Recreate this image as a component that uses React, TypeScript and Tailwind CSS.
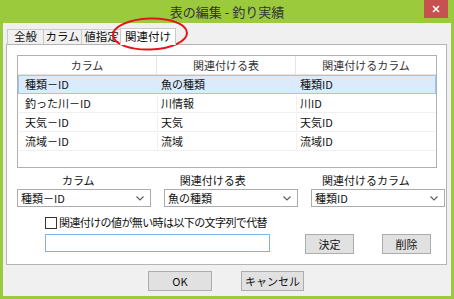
import { useState } from 'react';

const FONT = { fontFamily: '"Noto Sans CJK JP", "Noto Sans", sans-serif' };

const rows = [
  ['種類－ID', '魚の種類', '種類ID'],
  ['釣った川－ID', '川情報', '川ID'],
  ['天気－ID', '天気', '天気ID'],
  ['流域－ID', '流域', '流域ID'],
];

const tabs = ['全般', 'カラム', '値指定'];

function Chevron() {
  return (
    <svg width="8" height="5" viewBox="0 0 8 5" className="shrink-0">
      <polyline points="0.5,0.5 4,4 7.5,0.5" fill="none" stroke="#606060" strokeWidth="1.2" />
    </svg>
  );
}

function Select({ value }: { value: string }) {
  return (
    <div className="w-[134px] h-[18px] bg-white border border-[#acacac] flex items-center justify-between pl-[3px] pr-[6px]">
      <span className="leading-none">{value}</span>
      <Chevron />
    </div>
  );
}

function Button({ label, w }: { label: string; w: string }) {
  return (
    <div className={`${w} h-[20px] bg-[#e1e1e1] border border-[#adadad] flex items-center justify-center leading-none`}>
      {label}
    </div>
  );
}

export default function App() {
  const [checked, setChecked] = useState(false);

  return (
    <div className="w-[454px] h-[299px] bg-[#9bcb3c] flex flex-col text-[11px] text-[#111] relative" style={FONT}>
      {/* title bar */}
      <div className="h-[23px] relative flex items-center justify-center">
        <span className="text-[13px] text-[#333] leading-none">表の編集 - 釣り実績</span>
        <div className="absolute top-0 right-[6px] w-[24px] h-[18px] bg-[#c75050] flex items-center justify-center">
          <svg width="8" height="8" viewBox="0 0 8 8">
            <path d="M1 1 L7 7 M7 1 L1 7" stroke="#fff" strokeWidth="1.6" />
          </svg>
        </div>
      </div>

      {/* client area */}
      <div className="flex-1 mx-[3px] mb-[3px] bg-[#f0f0f0] flex flex-col pt-[4px]">
        {/* tabs */}
        <div className="h-[17px] flex items-end pl-[4px]">
          {tabs.map((t, i) => (
            <div
              key={t}
              className={`h-[15px] bg-[#f0f0f0] border border-b-0 border-[#c9c9c9] flex items-center justify-center leading-none text-[11.5px] ${
                i === 0 ? 'w-[37px]' : i === 1 ? 'w-[39px] -ml-px' : 'w-[41px] -ml-px'
              }`}
            >
              {t}
            </div>
          ))}
          <div className="relative z-10 -ml-[2px] w-[56px] h-[17px] bg-white border border-b-0 border-[#c9c9c9] flex items-center justify-center leading-none text-[11.5px] mb-[-1px] pb-px">
            関連付け
          </div>
        </div>

        {/* panel */}
        <div className="ml-[3px] w-[441px] h-[221px] bg-white border border-[#b4b4b4] flex flex-col pl-[10px] pt-[10px]">
          {/* list view */}
          <div className="w-[420px] h-[113px] border border-[#b0b0b0] flex flex-col">
            <div className="h-[19px] grid grid-cols-[139px_139px_140px] border-b border-[#e5e5e5] text-[#333]">
              <div className="flex items-center justify-center border-r border-[#e5e5e5]">カラム</div>
              <div className="flex items-center justify-center border-r border-[#e5e5e5]">関連付ける表</div>
              <div className="flex items-center justify-center">関連付けるカラム</div>
            </div>
            {rows.map((r, i) => (
              <div
                key={r[0]}
                className={`h-[19px] grid grid-cols-[139px_139px_140px] border ${
                  i === 0 ? 'bg-[#dcebfc] border-[#9cc6ee]' : 'border-transparent border-b-[#f0f0f0]'
                }`}
              >
                <div className={`flex items-center pl-[6px] ${i === 0 ? '' : 'border-r border-[#f0f0f0]'}`}>{r[0]}</div>
                <div className={`flex items-center pl-[3px] ${i === 0 ? '' : 'border-r border-[#f0f0f0]'}`}>{r[1]}</div>
                <div className="flex items-center pl-[3px]">{r[2]}</div>
              </div>
            ))}
          </div>

          {/* labels */}
          <div className="flex mt-[6px] h-[13px] items-center">
            <div className="w-[124px] text-center leading-none">カラム</div>
            <div className="w-[148px] text-center leading-none">関連付ける表</div>
            <div className="w-[162px] text-center leading-none">関連付けるカラム</div>
          </div>

          {/* selects */}
          <div className="flex gap-[13px] mt-[2px]">
            <Select value="種類－ID" />
            <Select value="魚の種類" />
            <Select value="種類ID" />
          </div>

          {/* checkbox */}
          <label className="flex items-center mt-[9px] ml-[28px] h-[13px] cursor-pointer select-none">
            <input
              type="checkbox"
              checked={checked}
              onChange={(e) => setChecked(e.target.checked)}
              className="appearance-none w-[12px] h-[12px] bg-white border border-[#333] mr-[2px]"
            />
            <span className="leading-none tracking-[-0.6px]">関連付けの値が無い時は以下の文字列で代替</span>
          </label>

          {/* text input + buttons */}
          <div className="flex mt-[5px] ml-[28px] items-start">
            <div className="w-[225px] h-[18px] bg-white border border-[#7eb4ea]" />
            <div className="ml-[35px]">
              <Button label="決定" w="w-[49px]" />
            </div>
            <div className="ml-[28px]">
              <Button label="削除" w="w-[49px]" />
            </div>
          </div>
        </div>

        {/* bottom buttons */}
        <div className="flex mt-[6px] pl-[145px] gap-[29px]">
          <Button label="OK" w="w-[64px]" />
          <Button label="キャンセル" w="w-[63px]" />
        </div>
      </div>

      {/* red annotation ellipse */}
      <svg className="absolute left-0 top-0 pointer-events-none" width="454" height="299">
        <ellipse cx="150" cy="34" rx="37" ry="15.5" fill="none" stroke="#e3141a" strokeWidth="2" transform="rotate(-2 150 34)" />
      </svg>
    </div>
  );
}
